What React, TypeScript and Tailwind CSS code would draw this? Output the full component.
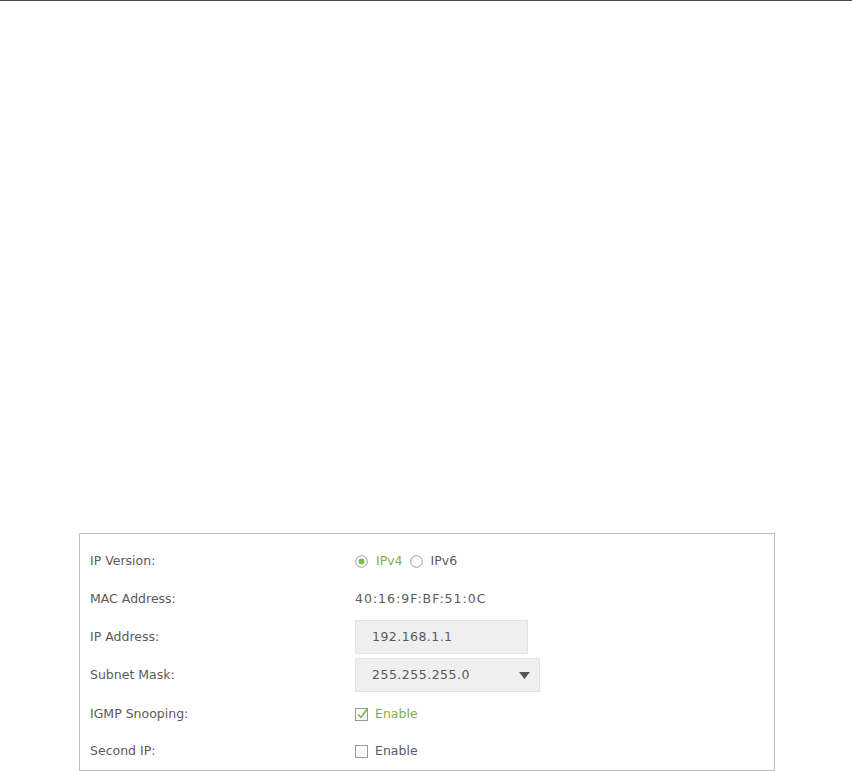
import React from "react";

function Radio({ checked }: { checked: boolean }) {
  return (
    <svg width="13" height="13" viewBox="0 0 13 13" className="shrink-0">
      <circle cx="6.5" cy="6.5" r="5.8" fill="#fff" stroke="#9a9a9a" strokeWidth="1" />
      {checked && <circle cx="6.5" cy="6.5" r="3" fill="#7cc04b" />}
    </svg>
  );
}

function Check({ checked }: { checked: boolean }) {
  return (
    <svg width="14" height="14" viewBox="0 0 14 14" className="shrink-0">
      <rect x="0.5" y="1.5" width="12" height="12" fill="#fafafa" stroke="#9a9a9a" strokeWidth="1" />
      {checked && <path d="M3 7.5 L6 10.5 L12.5 1.5" fill="none" stroke="#6fb43c" strokeWidth="1.4" />}
    </svg>
  );
}

export default function App() {
  const label = "w-[265px] shrink-0";
  return (
    <div className="w-[852px] h-[771px] bg-white relative overflow-hidden" style={{ fontFamily: '"DejaVu Sans", Tahoma, sans-serif' }}>
      <div className="h-px bg-[#4a4a4a]" />
      <div className="ml-[79px] mt-[532px] w-[696px] h-[238px] border border-[#bcbcbc] text-[12.5px] text-[#5a5a5a] pl-[10px] pt-[17px]">
        <div className="flex items-center h-[20px]">
          <div className={label}>IP Version:</div>
          <div className="flex items-center">
            <Radio checked />
            <span className="text-[#7fae4c] ml-[8px]">IPv4</span>
            <span className="ml-[7px]"><Radio checked={false} /></span>
            <span className="ml-[8px]">IPv6</span>
          </div>
        </div>
        <div className="flex items-center h-[20px] mt-[18px]">
          <div className={label}>MAC Address:</div>
          <div className="tracking-[1px]">40:16:9F:BF:51:0C</div>
        </div>
        <div className="flex items-center h-[34px] mt-[11px]">
          <div className={label}>IP Address:</div>
          <div className="w-[173px] h-[34px] bg-[#efefef] border border-[#e3e3e3] flex items-center pl-[16px] tracking-[0.45px]">192.168.1.1</div>
        </div>
        <div className="flex items-center h-[34px] mt-[4px]">
          <div className={label}>Subnet Mask:</div>
          <div className="w-[185px] h-[34px] bg-[#efefef] border border-[#e3e3e3] flex items-center pl-[16px] pr-[9px] justify-between">
            <span className="tracking-[0.5px]">255.255.255.0</span>
            <svg width="11" height="7" viewBox="0 0 11 7"><path d="M0 0 H11 L5.5 7 Z" fill="#555" /></svg>
          </div>
        </div>
        <div className="flex items-center h-[20px] mt-[12px]">
          <div className={label}>IGMP Snooping:</div>
          <div className="flex items-center">
            <Check checked />
            <span className="text-[#7fae4c] ml-[6px]">Enable</span>
          </div>
        </div>
        <div className="flex items-center h-[20px] mt-[17px]">
          <div className={label}>Second IP:</div>
          <div className="flex items-center">
            <Check checked={false} />
            <span className="ml-[6px]">Enable</span>
          </div>
        </div>
      </div>
    </div>
  );
}
